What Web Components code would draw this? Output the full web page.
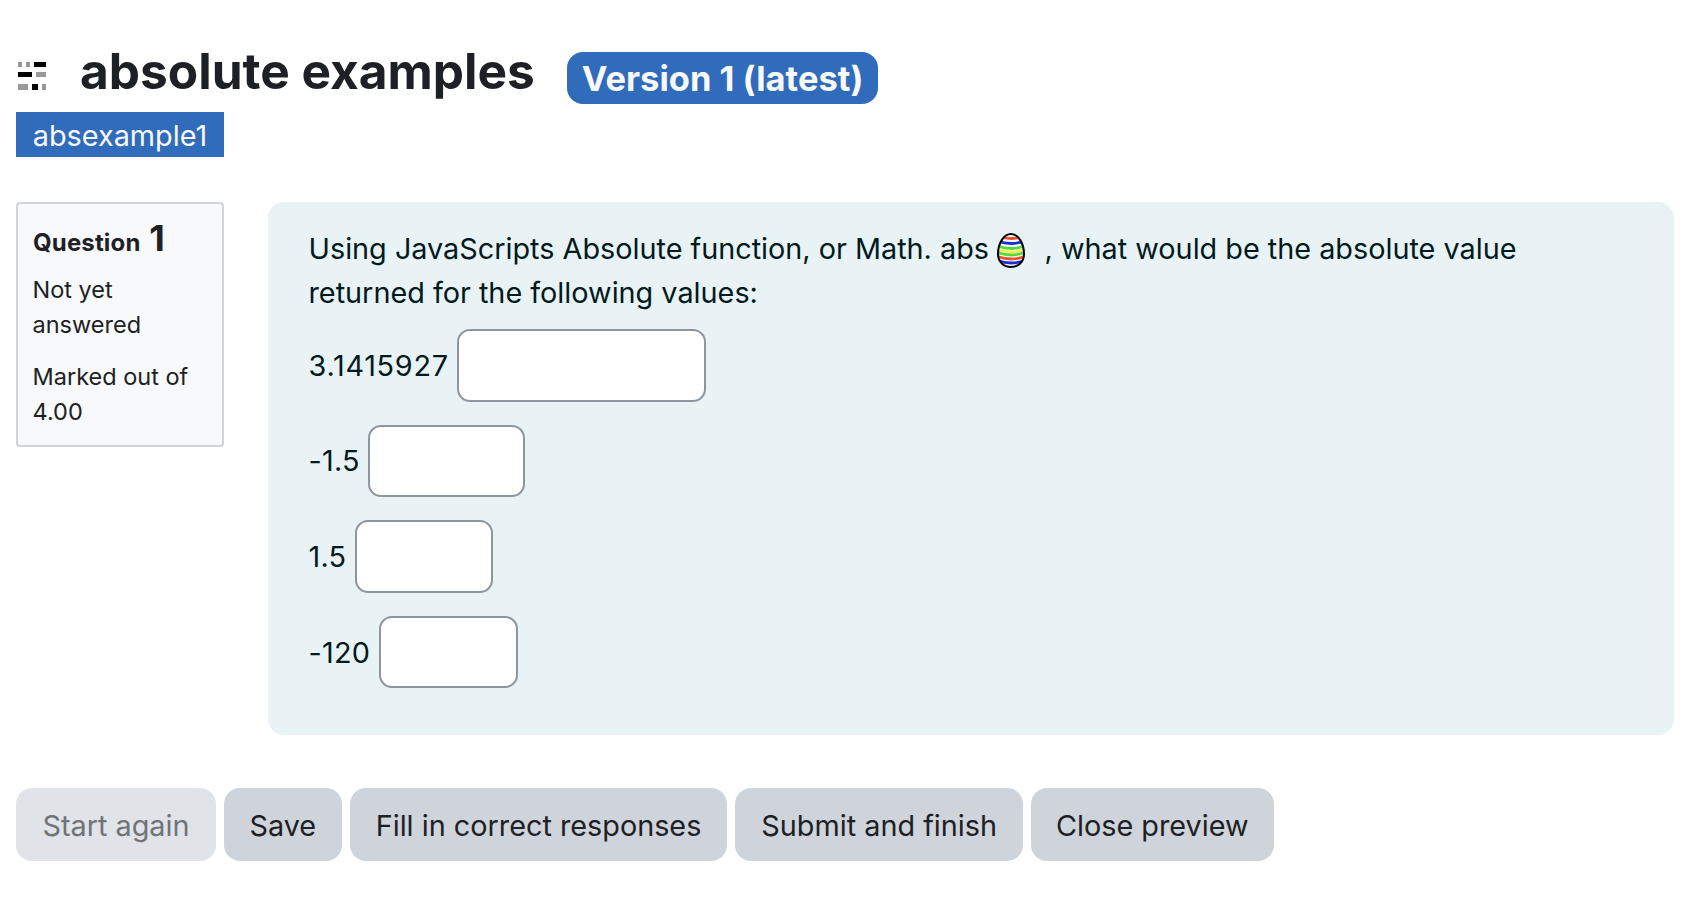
<!DOCTYPE html>
<html lang="en">
<head>
<meta charset="utf-8">
<title>absolute examples</title>
<style>
    html, body { margin: 0; background: #fff; }
    body {
        padding: 0 16px;
        font-family: Inter, "Liberation Sans", sans-serif;
        font-size: 28.8px;
        line-height: 1.5;
        color: #1d2125;
    }
</style>
</head>
<body>
<quiz-page>
    <page-header slot="header" title="absolute examples" version="Version 1 (latest)" tag="absexample1"></page-header>
    <question-info number="1" state="Not yet answered" mark="Marked out of 4.00"></question-info>
    <question-body>
        <p>Using JavaScripts Absolute function, or Math. abs <easter-egg></easter-egg>, what would be the absolute value<br>returned for the following values:</p>
        <answer-row label="3.1415927" width="249" spacing="0.74"></answer-row>
        <answer-row label="-1.5" width="157"></answer-row>
        <answer-row label="1.5" width="138"></answer-row>
        <answer-row label="-120" width="139"></answer-row>
    </question-body>
    <quiz-actions slot="actions">
        <quiz-button disabled style="--pad: 26.5px">Start again</quiz-button>
        <quiz-button style="--pad: 25.5px">Save</quiz-button>
        <quiz-button>Fill in correct responses</quiz-button>
        <quiz-button>Submit and finish</quiz-button>
        <quiz-button style="--pad: 25px">Close preview</quiz-button>
    </quiz-actions>
</quiz-page>

<script>
// Page skeleton: header, question row, action buttons
class QuizPage extends HTMLElement {
    constructor() {
        super();
        this.attachShadow({ mode: 'open' });
        this.shadowRoot.innerHTML = `
            <style>
                :host { display: block; }
                .question {
                    display: grid;
                    grid-template-columns: 208px 1fr;
                    gap: 44px;
                    align-items: start;
                    margin-top: 45px;
                }
                .actions { margin-top: 53px; }
            </style>
            <slot name="header"></slot>
            <div class="question"><slot></slot></div>
            <div class="actions"><slot name="actions"></slot></div>
        `;
    }
}

class PageHeader extends HTMLElement {
    constructor() {
        super();
        this.attachShadow({ mode: 'open' });
        this.shadowRoot.innerHTML = `
            <style>
                :host { display: block; padding-top: 36px; }
                .title { display: flex; align-items: flex-start; height: 76px; }
                svg { flex: none; width: 28px; height: 28px; margin: 26px 34px 0 2px; }
                h1 {
                    margin: 0;
                    font-size: 49.6px;
                    font-weight: 700;
                    line-height: 71px;
                    white-space: nowrap;
                }
                .version {
                    margin: 16px 0 0 32px;
                    padding: 1px 15px 0;
                    box-sizing: border-box;
                    height: 52px;
                    display: flex;
                    align-items: center;
                    background: #316bbb;
                    color: #f8f9fa;
                    border-radius: 16px;
                    font-size: 34.5px;
                    font-weight: 700;
                    white-space: nowrap;
                }
                .tag {
                    box-sizing: border-box;
                    width: 208px;
                    height: 45px;
                    line-height: 47px;
                    text-align: center;
                    background: #316bbb;
                    color: #f8f9fa;
                    white-space: nowrap;
                }
            </style>
            <div class="title">
                <svg viewBox="0 0 28 28" shape-rendering="crispEdges">
                    <g fill="#999">
                        <rect x="0" y="0" width="4" height="5"/>
                        <rect x="8" y="0" width="4" height="5"/>
                        <rect x="18" y="10" width="10" height="5"/>
                        <rect x="0" y="22" width="10" height="6"/>
                        <rect x="24" y="22" width="4" height="6"/>
                    </g>
                    <g fill="#000">
                        <rect x="16" y="0" width="12" height="5"/>
                        <rect x="0" y="10" width="14" height="5"/>
                        <rect x="14" y="22" width="6" height="6"/>
                    </g>
                </svg>
                <h1></h1>
                <span class="version"></span>
            </div>
            <div class="tag"></div>
        `;
    }
    connectedCallback() {
        this.shadowRoot.querySelector('h1').textContent = this.getAttribute('title');
        this.shadowRoot.querySelector('.version').textContent = this.getAttribute('version');
        this.shadowRoot.querySelector('.tag').textContent = this.getAttribute('tag');
    }
}

class QuestionInfo extends HTMLElement {
    constructor() {
        super();
        this.attachShadow({ mode: 'open' });
        this.shadowRoot.innerHTML = `
            <style>
                :host {
                    display: block;
                    box-sizing: border-box;
                    height: 245px;
                    padding: 12px 14.5px;
                    background: #f8f9fa;
                    border: 2px solid #ced4da;
                    border-radius: 4px;
                    font-size: 23.5px;
                    line-height: 35.4px;
                }
                h3 { margin: 0 0 7px; padding-left: .5px; font-size: 24px; font-weight: 700; letter-spacing: .15px; line-height: 44px; white-space: nowrap; }
                .num { font-size: 36px; margin-left: 3px; }
                div { margin-bottom: 16px; }
            </style>
            <h3>Question <span class="num"></span></h3>
            <div class="state"></div>
            <div class="mark"></div>
        `;
    }
    connectedCallback() {
        this.shadowRoot.querySelector('.num').textContent = this.getAttribute('number');
        this.shadowRoot.querySelector('.state').textContent = this.getAttribute('state');
        this.shadowRoot.querySelector('.mark').textContent = this.getAttribute('mark');
    }
}

class QuestionBody extends HTMLElement {
    constructor() {
        super();
        this.attachShadow({ mode: 'open' });
        this.shadowRoot.innerHTML = `
            <style>
                :host {
                    display: block;
                    box-sizing: border-box;
                    height: 533px;
                    padding: 25px 40.5px;
                    background: #e9f2f5;
                    border-radius: 16px;
                    color: #001a1e;
                    line-height: 44px;
                }
                ::slotted(p) { margin: 0 0 14px; white-space: nowrap; }
            </style>
            <slot></slot>
        `;
    }
}

class EasterEgg extends HTMLElement {
    constructor() {
        super();
        this.attachShadow({ mode: 'open' });
        this.shadowRoot.innerHTML = `
            <style>
                :host { display: inline-block; width: 28px; height: 35px; margin: 0 19.5px 0 0; vertical-align: -9px; }
                svg { display: block; }
            </style>
            <svg width="28" height="35" viewBox="0 0 28 35">
                <defs>
                    <clipPath id="egg"><path d="M14 1C21 1 27 10 27 21C27 29 21 34 14 34C7 34 1 29 1 21C1 10 7 1 14 1Z"/></clipPath>
                </defs>
                <path d="M14 1C21 1 27 10 27 21C27 29 21 34 14 34C7 34 1 29 1 21C1 10 7 1 14 1Z" fill="#fff"/>
                <g clip-path="url(#egg)" fill="none" stroke-width="2.8">
                    <path d="M0 3Q14 8 28 3" stroke="#f4512c"/>
                    <path d="M0 8Q14 13 28 8" stroke="#1a2fd8"/>
                    <path d="M0 13Q14 18 28 13" stroke="#58d93a"/>
                    <path d="M0 16.5Q14 21.5 28 16.5" stroke="#f2f05a"/>
                    <path d="M0 19.5Q14 24.5 28 19.5" stroke="#58d93a"/>
                    <path d="M0 23.5Q14 28.5 28 23.5" stroke="#f4512c"/>
                    <path d="M0 27.5Q14 32.5 28 27.5" stroke="#1a2fd8"/>
                </g>
                <path d="M14 1C21 1 27 10 27 21C27 29 21 34 14 34C7 34 1 29 1 21C1 10 7 1 14 1Z" fill="none" stroke="#000" stroke-width="2"/>
            </svg>
        `;
    }
}

class AnswerRow extends HTMLElement {
    constructor() {
        super();
        this.attachShadow({ mode: 'open' });
        this.shadowRoot.innerHTML = `
            <style>
                :host { display: flex; align-items: center; gap: 8.5px; margin-bottom: 23px; }
                label { letter-spacing: .25px; padding-top: 1px; }
                input {
                    box-sizing: border-box;
                    height: 72.6px;
                    padding: 0 16px;
                    border: 2px solid #8f959e;
                    border-radius: 13px;
                    background: #fff;
                    font: inherit;
                }
            </style>
            <label></label>
            <input type="text">
        `;
    }
    connectedCallback() {
        const label = this.shadowRoot.querySelector('label');
        label.textContent = this.getAttribute('label');
        if (this.hasAttribute('spacing')) label.style.letterSpacing = this.getAttribute('spacing') + 'px';
        this.shadowRoot.querySelector('input').style.width = this.getAttribute('width') + 'px';
    }
}

class QuizActions extends HTMLElement {
    constructor() {
        super();
        this.attachShadow({ mode: 'open' });
        this.shadowRoot.innerHTML = `
            <style>
                :host { display: flex; gap: 8px; }
            </style>
            <slot></slot>
        `;
    }
}

class QuizButton extends HTMLElement {
    constructor() {
        super();
        this.attachShadow({ mode: 'open' });
        this.shadowRoot.innerHTML = `
            <style>
                :host { display: block; }
                button {
                    display: block;
                    height: 73px;
                    padding: 2px var(--pad, 26px) 0;
                    border: 0;
                    border-radius: 16px;
                    background: #ced4da;
                    color: #1d2125;
                    font: inherit;
                    white-space: nowrap;
                }
                :host([disabled]) button { background: #e0e3e7; color: #6f7478; }
            </style>
            <button><slot></slot></button>
        `;
    }
}

customElements.define('quiz-page', QuizPage);
customElements.define('page-header', PageHeader);
customElements.define('question-info', QuestionInfo);
customElements.define('question-body', QuestionBody);
customElements.define('easter-egg', EasterEgg);
customElements.define('answer-row', AnswerRow);
customElements.define('quiz-actions', QuizActions);
customElements.define('quiz-button', QuizButton);
</script>
</body>
</html>
